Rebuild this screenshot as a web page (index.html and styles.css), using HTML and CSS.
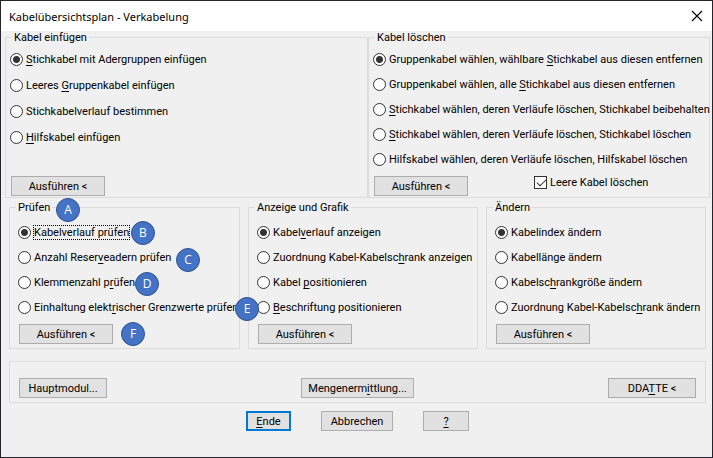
FILE: index.html
```html
<!DOCTYPE html>
<html lang="de">
<head>
  <meta charset="UTF-8">
  <title>Kabelübersichtsplan - Verkabelung</title>
  <link rel="stylesheet" href="styles.css">
</head>
<body>
  <div class="dialog">
    <header class="titlebar">
      <h1>Kabelübersichtsplan - Verkabelung</h1>
      <button type="button" class="close" aria-label="Schließen">
        <svg width="12" height="12" viewBox="0 0 12 12"><path d="M1 1L11 11M11 1L1 11" fill="none" stroke="#000" stroke-width="1.1"/></svg>
      </button>
    </header>

    <div class="top">
      <fieldset class="wide">
        <legend>Kabel einfügen</legend>
        <div class="options loose">
          <label><input type="radio" name="einfuegen" checked><span><u>S</u>tichkabel mit Adergruppen einfügen</span></label>
          <label><input type="radio" name="einfuegen"><span>Leeres <u>G</u>ruppenkabel einfügen</span></label>
          <label><input type="radio" name="einfuegen"><span>Stichkabelverlauf bestimmen</span></label>
          <label><input type="radio" name="einfuegen"><span><u>H</u>ilfskabel einfügen</span></label>
        </div>
        <div class="actions">
          <button type="button" class="run">Ausführen &lt;</button>
        </div>
      </fieldset>
      <fieldset class="wide">
        <legend>Kabel löschen</legend>
        <div class="options">
          <label><input type="radio" name="loeschen" checked><span>Gruppenkabel wählen, wählbare <u>S</u>tichkabel aus diesen entfernen</span></label>
          <label><input type="radio" name="loeschen"><span>Gruppenkabel wählen, alle <u>S</u>tichkabel aus diesen entfernen</span></label>
          <label><input type="radio" name="loeschen"><span><u>S</u>tichkabel wählen, deren Verläufe löschen, Stichkabel beibehalten</span></label>
          <label><input type="radio" name="loeschen"><span><u>S</u>tichkabel wählen, deren Verläufe löschen, Stichkabel löschen</span></label>
          <label><input type="radio" name="loeschen"><span>Hilfskabel wählen, deren Verläufe löschen, Hilfskabel löschen</span></label>
        </div>
        <div class="actions">
          <button type="button" class="run">Ausführen &lt;</button>
          <label><input type="checkbox" checked><span>Leere Kabel löschen</span></label>
        </div>
      </fieldset>
    </div>

    <div class="middle">
      <fieldset>
        <legend>Prüfen</legend>
        <div class="options">
          <label><input type="radio" name="pruefen" checked><span class="focused">Kabelverlauf prüfen</span></label>
          <label><input type="radio" name="pruefen"><span>Anzahl Reser<u>v</u>eadern prüfen</span></label>
          <label><input type="radio" name="pruefen"><span>Klemmenzahl p<u>r</u>üfen</span></label>
          <label><input type="radio" name="pruefen"><span>Einhaltung elekt<u>r</u>ischer Grenzwerte prüfen</span></label>
        </div>
        <div class="actions">
          <button type="button" class="run">Ausführen &lt;</button>
        </div>
        <span class="badge a">A</span>
        <span class="badge b">B</span>
        <span class="badge c">C</span>
        <span class="badge d">D</span>
        <span class="badge e">E</span>
        <span class="badge f">F</span>
      </fieldset>
      <fieldset>
        <legend>Anzeige und Grafik</legend>
        <div class="options">
          <label><input type="radio" name="anzeige" checked><span>Kabel<u>v</u>erlauf anzeigen</span></label>
          <label><input type="radio" name="anzeige"><span>Zuordnung Kabel-Kabelsc<u>h</u>rank anzeigen</span></label>
          <label><input type="radio" name="anzeige"><span>Kabel <u>p</u>ositionieren</span></label>
          <label><input type="radio" name="anzeige"><span><u>B</u>eschriftung positionieren</span></label>
        </div>
        <div class="actions">
          <button type="button" class="run">Ausführen &lt;</button>
        </div>
      </fieldset>
      <fieldset>
        <legend>Ändern</legend>
        <div class="options">
          <label><input type="radio" name="aendern" checked><span>Kabelindex ändern</span></label>
          <label><input type="radio" name="aendern"><span>Kabellänge ändern</span></label>
          <label><input type="radio" name="aendern"><span>Kabelsc<u>h</u>rankgröße ändern</span></label>
          <label><input type="radio" name="aendern"><span>Zuordnung Kabel-Kabelsc<u>h</u>rank ändern</span></label>
        </div>
        <div class="actions">
          <button type="button" class="run">Ausführen &lt;</button>
        </div>
      </fieldset>
    </div>

    <div class="modules">
      <button type="button">Hauptmodul...</button>
      <button type="button">Mengenerm<u>i</u>ttlung...</button>
      <button type="button">DDA<u>T</u>TE &lt;</button>
    </div>

    <footer>
      <button type="button" class="default"><u>E</u>nde</button>
      <button type="button" class="cancel">Abbrechen</button>
      <button type="button" class="help"><u>?</u></button>
    </footer>
  </div>
</body>
</html>
```
FILE: styles.css
```css
* {
  box-sizing: border-box;
}
body {
  margin: 0;
  font-family: Roboto, "Liberation Sans", sans-serif;
  font-size: 11px;
  line-height: 13px;
  color: #000;
  background-color: #f0f0f0;
}
.dialog {
  min-height: 100vh;
  border: 1px solid #25232c;
  background-color: #f0f0f0;
}
.titlebar {
  display: flex;
  justify-content: space-between;
  align-items: center;
  height: 30px;
  padding: 0 9px 0 8px;
  background-color: #fff;
}
h1 {
  margin: 0;
  font-family: "Noto Sans", "Open Sans", sans-serif;
  font-size: 11px;
  font-weight: normal;
}
fieldset {
  position: relative;
  display: flex;
  flex-direction: column;
  min-width: 0;
  margin: 0;
  padding: 12px 9px 4px;
  border: 1px solid #dcdcdc;
}
fieldset.wide {
  padding: 9px 5px 1px;
}
legend {
  margin-left: -3px;
  padding: 0 2px;
  line-height: 13px;
}
.wide legend {
  margin-left: 1px;
}
label {
  display: flex;
  align-items: center;
  gap: 3px;
  height: 13px;
  white-space: nowrap;
}
u {
  text-underline-offset: 2px;
}
.options {
  display: flex;
  flex-direction: column;
  align-items: flex-start;
  gap: 12px;
  margin-left: -1px;
}
.options.loose {
  gap: 13px;
}
.actions {
  display: flex;
  justify-content: space-between;
  align-items: flex-start;
  margin-top: auto;
  padding-top: 10px;
}
.wide .actions {
  justify-content: flex-start;
  gap: 66px;
}
input {
  appearance: none;
  flex: none;
  width: 13px;
  height: 13px;
  margin: 0;
  border: 1px solid #333;
  background-color: #fff;
}
input[type="radio"] {
  border-radius: 50%;
}
input[type="radio"]:checked {
  background-image: radial-gradient(circle, #333 3px, transparent 4px);
}
input[type="checkbox"]:checked::after {
  content: "";
  display: block;
  width: 8px;
  height: 4px;
  margin: 2px 0 0 2px;
  border: solid #333;
  border-width: 0 0 1px 1px;
  transform: rotate(-45deg);
}
.focused {
  outline: 1px dotted #000;
}
button {
  height: 20px;
  padding: 0;
  border: 1px solid #adadad;
  background-color: #e1e1e1;
  color: #000;
  font: inherit;
}
.run {
  width: 94px;
}
.close {
  display: flex;
  border: none;
  background: none;
  height: 12px;
}
.top {
  display: grid;
  grid-template-columns: 363fr 342fr;
  padding: 0 2px 0 4px;
}
.middle {
  display: grid;
  grid-template-columns: 231fr 230fr 220fr;
  gap: 8px;
  margin-top: 3px;
  padding: 0 6px 0 8px;
}
.modules {
  display: flex;
  justify-content: space-between;
  margin: 12px 6px 0 8px;
  padding: 16px 9px 4px;
  border: 1px solid #dcdcdc;
}
.modules button {
  width: 88px;
}
.modules button:nth-child(2) {
  width: 113px;
}
footer {
  display: flex;
  justify-content: center;
  gap: 30px;
  padding: 8px 0 26px 2px;
}
.default {
  width: 45px;
  border: 2px solid #0078d7;
}
.cancel {
  width: 72px;
}
.help {
  width: 46px;
}

/* lettered callouts over the Prüfen group */
.badge {
  position: absolute;
  width: 24px;
  height: 24px;
  border: 1px solid #2f528f;
  border-radius: 50%;
  background-color: #4472c4;
  color: #fff;
  font-family: "Open Sans", sans-serif;
  font-size: 12px;
  line-height: 22px;
  text-align: center;
  z-index: 1;
}
.badge.a { left: 46px; top: -16px; }
.badge.b { left: 121px; top: 7px; }
.badge.c { left: 166px; top: 34px; }
.badge.d { left: 125px; top: 58px; }
.badge.e { left: 225px; top: 83px; }
.badge.f { left: 111px; top: 108px; }
```
